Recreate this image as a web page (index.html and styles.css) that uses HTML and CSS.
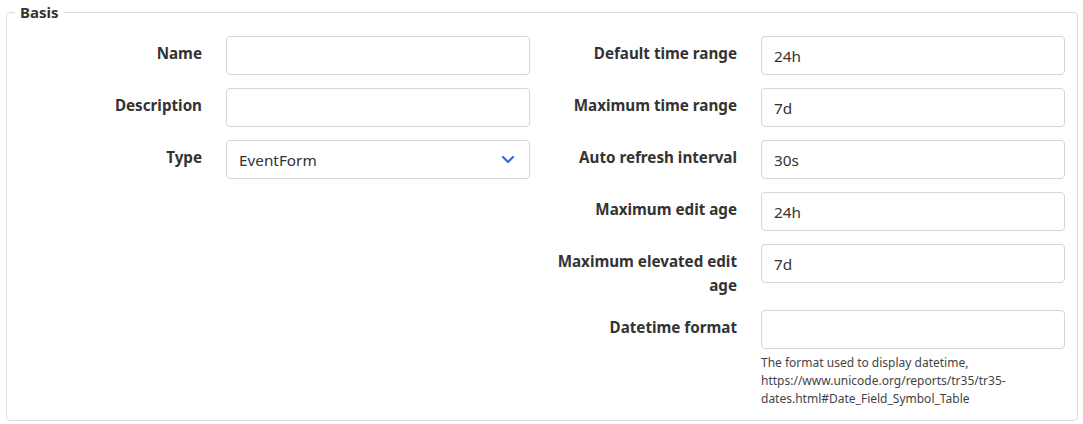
FILE: index.html
```html
<!DOCTYPE html>
<html lang="en">
<head>
<meta charset="utf-8">
<title>Basis</title>
<link rel="stylesheet" href="styles.css">
</head>
<body>
<fieldset class="group">
  <legend class="group-title">Basis</legend>
  <div class="cols">
    <div class="col">
      <div class="row">
        <label class="label" for="f-name">Name</label>
        <div class="field"><input class="input" id="f-name" type="text" value=""></div>
      </div>
      <div class="row">
        <label class="label" for="f-desc">Description</label>
        <div class="field"><input class="input" id="f-desc" type="text" value=""></div>
      </div>
      <div class="row">
        <label class="label" for="f-type">Type</label>
        <div class="field">
          <div class="select" id="f-type">
            <span class="select-value">EventForm</span>
            <svg class="chevron" width="14" height="9" viewBox="0 0 14 9"><polyline points="2,2 7,7 12,2" fill="none" stroke="#3d70de" stroke-width="2.4" stroke-linecap="round" stroke-linejoin="round"/></svg>
          </div>
        </div>
      </div>
    </div>
    <div class="col">
      <div class="row">
        <label class="label" for="f-dtr">Default time range</label>
        <div class="field"><input class="input" id="f-dtr" type="text" value="24h"></div>
      </div>
      <div class="row">
        <label class="label" for="f-mtr">Maximum time range</label>
        <div class="field"><input class="input" id="f-mtr" type="text" value="7d"></div>
      </div>
      <div class="row">
        <label class="label" for="f-ari">Auto refresh interval</label>
        <div class="field"><input class="input" id="f-ari" type="text" value="30s"></div>
      </div>
      <div class="row">
        <label class="label" for="f-mea">Maximum edit age</label>
        <div class="field"><input class="input" id="f-mea" type="text" value="24h"></div>
      </div>
      <div class="row">
        <label class="label" for="f-meea">Maximum elevated edit age</label>
        <div class="field"><input class="input" id="f-meea" type="text" value="7d"></div>
      </div>
      <div class="row">
        <label class="label" for="f-dtf">Datetime format</label>
        <div class="field">
          <input class="input" id="f-dtf" type="text" value="">
          <p class="help">The format used to display datetime, https://www.unicode.org/reports/tr35/tr35-dates.html#Date_Field_Symbol_Table</p>
        </div>
      </div>
    </div>
  </div>
</fieldset>
</body>
</html>
```

FILE: styles.css
```css
html, body {
  margin: 0;
  padding: 0;
  background: #ffffff;
}
body {
  padding: 0 5px 0 6px;
  font-family: "Noto Sans", "DejaVu Sans", sans-serif;
  color: #333333;
}
.group {
  margin: 0;
  padding: 12px 0 12px 0;
  border: 1px solid #dcdcdc;
  border-radius: 4px;
  min-width: 0;
}
.group-title {
  margin-left: 8px;
  padding: 0 5px;
  font-size: 15px;
  font-weight: 700;
  line-height: 24px;
  color: #333333;
}
.cols {
  display: grid;
  grid-template-columns: 1fr 1fr;
}
.col {
  display: flex;
  flex-direction: column;
  gap: 13px;
}
.row {
  display: grid;
  grid-template-columns: 207px 1fr;
}
.label {
  padding: 6px 12px 0 0;
  text-align: right;
  font-size: 15.2px;
  font-weight: 700;
  line-height: 23.5px;
  color: #333333;
}
.field {
  padding: 0 12px;
}
.input, .select {
  box-sizing: border-box;
  display: block;
  width: 100%;
  height: 39px;
  margin: 0;
  padding: 0 12px;
  border: 1px solid #d6d6d6;
  border-radius: 4px;
  background: #ffffff;
  font-family: "Noto Sans", "DejaVu Sans", sans-serif;
  font-size: 15.3px;
  color: #333333;
  outline: none;
}
.select {
  display: flex;
  align-items: center;
  justify-content: space-between;
  padding-right: 14px;
}
.chevron {
  display: block;
}
.help {
  margin: 5px 0 0 0;
  font-size: 12px;
  line-height: 18px;
  color: #444444;
}
```
